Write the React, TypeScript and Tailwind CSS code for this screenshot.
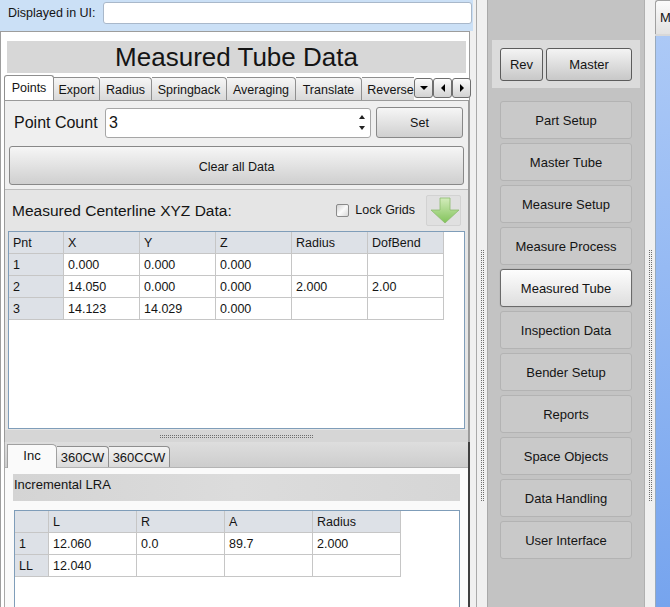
import React from "react";

const vdots =
  "bg-[repeating-linear-gradient(to_bottom,#6e6e6e_0px,#6e6e6e_1px,transparent_1px,transparent_2px)]";
const hdots =
  "bg-[repeating-linear-gradient(to_right,#6e6e6e_0px,#6e6e6e_1px,transparent_1px,transparent_2px)]";

function VGrip({ h }: { h: number }) {
  return (
    <div className="flex gap-[1px]" style={{ height: h }}>
      <div className={`w-[1px] h-full ${vdots}`} />
      <div className={`w-[1px] h-full ${vdots}`} />
    </div>
  );
}

function Grid({ cols, rows }: { cols: number[]; rows: string[][] }) {
  return (
    <div>
      {rows.map((r, i) => (
        <div key={i} className="flex">
          {r.map((c, j) => (
            <div
              key={j}
              style={{ width: cols[j] }}
              className={`h-[22px] border-r border-b border-[#c6c6c6] flex items-center pl-[4px] pt-[2px] text-[12.5px] ${
                i === 0 || j === 0 ? "bg-[#dde1e7]" : "bg-white"
              }`}
            >
              {c}
            </div>
          ))}
        </div>
      ))}
    </div>
  );
}

function Tri({ dir }: { dir: "down" | "left" | "right" | "up" }) {
  const pts =
    dir === "down"
      ? "0,0 8,0 4,4"
      : dir === "up"
      ? "0,4 8,4 4,0"
      : dir === "left"
      ? "4,0 4,8 0,4"
      : "0,0 0,8 4,4";
  const w = dir === "down" || dir === "up" ? 8 : 4;
  const h = dir === "down" || dir === "up" ? 4 : 8;
  return (
    <svg width={w} height={h} viewBox={`0 0 ${w} ${h}`}>
      <polygon points={pts} fill="#000" />
    </svg>
  );
}

const topTabs: [string, number][] = [
  ["Export", 46],
  ["Radius", 52],
  ["Springback", 75],
  ["Averaging", 69],
  ["Translate", 66],
  ["Reverse", 58],
];

const navItems = [
  "Part Setup",
  "Master Tube",
  "Measure Setup",
  "Measure Process",
  "Measured Tube",
  "Inspection Data",
  "Bender Setup",
  "Reports",
  "Space Objects",
  "Data Handling",
  "User Interface",
];

export default function App() {
  return (
    <div className="w-[670px] h-[607px] flex overflow-hidden bg-[#f0f0f0] text-[#141414] text-[12.5px] leading-none font-['Liberation_Sans',Arial,sans-serif]">
      {/* LEFT COLUMN */}
      <div className="w-[476px] shrink-0 flex flex-col">
        <div className="h-[31px] w-[473px] shrink-0 bg-[#cbe0f6] flex items-center pl-[8px] pr-[1px] pb-[5px] gap-[7px]">
          <span>Displayed in UI:</span>
          <div className="flex-1 h-[22px] bg-white border border-[#a9b8ca] rounded-[3px]" />
        </div>

        <div className="flex-1 min-h-0 w-[470px] bg-white border-x border-t border-[#9d9d9d] flex flex-col pl-[3px]">
          <div className="mt-[9px] ml-[3px] w-[459px] h-[32px] shrink-0 bg-[#d7d7d7] flex items-center justify-center text-[26px]">
            Measured Tube Data
          </div>

          {/* tabs row */}
          <div className="mt-[2px] h-[25px] shrink-0 flex items-end w-[465px]">
            <div className="flex-1 h-full flex items-end overflow-hidden">
              <div className="relative z-10 -mb-px w-[50px] h-[26px] shrink-0 bg-white border-t border-l border-r border-[#8f8f8f] rounded-t-[3px] flex items-center justify-center">
                Points
              </div>
              {topTabs.map(([t, w]) => (
                <div
                  key={t}
                  style={{ width: w }}
                  className="h-[23px] shrink-0 bg-linear-to-b from-[#f6f6f6] to-[#d9d9d9] border-t border-r border-[#8f8f8f] rounded-tr-[4px] flex items-center justify-center pt-[3px] whitespace-nowrap"
                >
                  {t}
                </div>
              ))}
            </div>
            <div className="flex mb-[2px] mr-[-2px]">
              {(["down", "left", "right"] as const).map((d) => (
                <div
                  key={d}
                  className="w-[19px] h-[20px] rounded-[3px] border border-[#6f6f6f] bg-linear-to-b from-[#fbfbfb] to-[#d3d3d3] flex items-center justify-center"
                >
                  <Tri dir={d} />
                </div>
              ))}
            </div>
          </div>

          {/* points pane */}
          <div className="w-[465px] shrink-0 border-x border-t border-[#9a9a9a] bg-[#efefef] flex flex-col">
            <div className="mt-[6px] h-[31px] flex items-center pl-[9px]">
              <span className="text-[16px] w-[91px]">Point Count</span>
              <div className="w-[266px] h-[30px] bg-white border border-[#a6a6a6] rounded-[3px] flex items-center pl-[3px] text-[16px] relative">
                3
                <div className="absolute right-[5px] top-[6px] flex flex-col gap-[7px]">
                  <svg width="6" height="4" viewBox="0 0 6 4">
                    <polygon points="0,4 6,4 3,0" fill="#222" />
                  </svg>
                  <svg width="6" height="4" viewBox="0 0 6 4">
                    <polygon points="0,0 6,0 3,4" fill="#222" />
                  </svg>
                </div>
              </div>
              <div className="ml-[5px] w-[87px] h-[31px] rounded-[3px] border border-[#888] bg-linear-to-b from-[#f6f6f6] to-[#d0d0d0] flex items-center justify-center pt-[1px]">
                Set
              </div>
            </div>
            <div className="mt-[8px] ml-[4px] w-[455px] h-[39px] rounded-[3px] border border-[#888] bg-linear-to-b from-[#f6f6f6] to-[#cfcfcf] flex items-center justify-center pt-[3px]">
              Clear all Data
            </div>

            {/* section */}
            <div className="mt-[4px] border-t border-[#bdbdbd] bg-[#e5e5e5] flex flex-col">
              <div className="mt-[5px] h-[31px] flex items-center pl-[7px] pr-[7px]">
                <span className="text-[15.5px] flex-1">Measured Centerline XYZ Data:</span>
                <div className="w-[13px] h-[13px] rounded-[2px] border border-[#8a8a8a] bg-linear-to-br from-[#d2d2d2] via-[#fafafa] to-[#d8d8d8]" />
                <span className="ml-[6px]">Lock Grids</span>
                <div className="ml-[11px] w-[35px] h-[31px] bg-[#e0e0e0] border border-[#d2d2d2] rounded-[2px] relative">
                  <svg width="35" height="31" viewBox="0 0 35 31" className="absolute left-[-1px] top-[-1px]">
                    <defs>
                      <linearGradient id="ga" x1="0" y1="0" x2="0" y2="1">
                        <stop offset="0" stopColor="#d3ecbb" />
                        <stop offset="1" stopColor="#82c35a" />
                      </linearGradient>
                    </defs>
                    <polygon
                      points="14,3 24,3 24,15 33,15 19,28 5,15 14,15"
                      fill="url(#ga)"
                      stroke="#8dbb70"
                      strokeWidth="0.8"
                    />
                  </svg>
                </div>
              </div>
              <div className="mt-[5px] ml-[3px] w-[457px] h-[198px] border border-[#7f9db9] bg-white overflow-hidden">
                <Grid
                  cols={[55, 76, 76, 76, 76, 76]}
                  rows={[
                    ["Pnt", "X", "Y", "Z", "Radius", "DofBend"],
                    ["1", "0.000", "0.000", "0.000", "", ""],
                    ["2", "14.050", "0.000", "0.000", "2.000", "2.00"],
                    ["3", "14.123", "14.029", "0.000", "", ""],
                  ]}
                />
              </div>
              <div className="h-[1px]" />
            </div>
            {/* splitter */}
            <div className="h-[12px] bg-[#d6d6d6] flex items-center justify-center">
              <div className="flex flex-col gap-[1px] w-[153px]">
                <div className={`h-[1px] w-full ${hdots}`} />
                <div className={`h-[1px] w-full ${hdots}`} />
              </div>
            </div>
          </div>

          {/* bottom tab widget */}
          <div className="flex-1 min-h-0 w-[466px] flex flex-col border-r-2 border-[#3f3f3f] border-l border-l-[#a8a8a8]">
            <div className="h-[25px] shrink-0 bg-linear-to-b from-[#dedede] to-[#cdcdcd] flex items-end pl-[2px]">
              <div className="relative z-10 -mb-px w-[50px] h-[24px] bg-[#fafafa] border-t border-l border-r border-[#a0a0a0] rounded-tr-[5px] flex items-center justify-center text-[13px] pb-[2px]">
                Inc
              </div>
              <div className="w-[52px] h-[21px] bg-linear-to-b from-[#f4f4f4] to-[#dadada] border-t border-r border-[#8f8f8f] rounded-tr-[4px] flex items-center justify-center text-[13px] pt-[1px]">
                360CW
              </div>
              <div className="w-[61px] h-[21px] bg-linear-to-b from-[#f4f4f4] to-[#dadada] border-t border-r border-[#8f8f8f] rounded-tr-[4px] flex items-center justify-center text-[13px] pt-[1px]">
                360CCW
              </div>
            </div>
            <div className="flex-1 min-h-0 bg-[#fafafa] border-t border-[#b4b4b4] flex flex-col pl-[8px]">
              <div className="mt-[6px] w-[447px] h-[27px] bg-linear-to-r from-[#d4d4d4] via-[#dcdcdc] to-[#d6d6d6] pl-[1px] pt-[4px] text-[13px]">
                Incremental LRA
              </div>
              <div className="mt-[9px] ml-[1px] w-[446px] flex-1 border border-b-0 border-[#7f9db9] bg-white">
                <Grid
                  cols={[34, 88, 88, 88, 88]}
                  rows={[
                    ["", "L", "R", "A", "Radius"],
                    ["1", "12.060", "0.0", "89.7", "2.000"],
                    ["LL", "12.040", "", "", ""],
                  ]}
                />
              </div>
            </div>
          </div>
        </div>
      </div>

      {/* SEPARATOR 1 */}
      <div className="w-[12px] shrink-0 border-x border-[#a9a9a9] bg-[#f0f0f0] flex flex-col items-center pt-[250px]">
        <VGrip h={252} />
      </div>

      {/* MIDDLE NAV PANEL */}
      <div className="w-[156px] shrink-0 bg-[#c3c3c3] flex flex-col items-center pt-[40px]">
        <div className="w-[148px] h-[48px] bg-[#dbdbdb] flex items-center pl-[8px] gap-[3px]">
          <div className="w-[43px] h-[33px] rounded-[3px] border border-[#5c5c5c] bg-linear-to-b from-[#f4f4f4] to-[#c8c8c8] flex items-center justify-center text-[13px]">
            Rev
          </div>
          <div className="w-[86px] h-[33px] rounded-[3px] border border-[#5c5c5c] bg-linear-to-b from-[#f4f4f4] to-[#c8c8c8] flex items-center justify-center text-[13px]">
            Master
          </div>
        </div>
        <div className="mt-[13px] w-[132px] flex flex-col gap-[4px]">
          {navItems.map((n) =>
            n === "Measured Tube" ? (
              <div
                key={n}
                className="h-[38px] rounded-[3px] border border-[#6a6a6a] bg-linear-to-b from-[#fdfdfd] to-[#dedede] shadow-[0_0_1px_#888] flex items-center justify-center text-[13px]"
              >
                {n}
              </div>
            ) : (
              <div
                key={n}
                className="h-[38px] rounded-[3px] border border-[#b3b3b3] bg-[#c9c9c9] flex items-center justify-center text-[13px]"
              >
                {n}
              </div>
            )
          )}
        </div>
      </div>

      {/* SEPARATOR 2 */}
      <div className="w-[11px] shrink-0 border-l border-[#b0b0b0] bg-[#f0f0f0] flex flex-col items-center pt-[250px]">
        <VGrip h={252} />
      </div>

      {/* RIGHT EDGE */}
      <div className="flex-1 flex flex-col">
        <div className="h-[34px] shrink-0 bg-linear-to-b from-[#fbfbfb] to-[#e2e2e2] border-l border-t border-[#a0a0a0] rounded-tl-[3px] flex items-center pl-[4px] text-[13px] overflow-hidden">
          M
        </div>
        <div className="h-[2px] bg-[#d8d8d8]" />
        <div className="flex-1 bg-linear-to-b from-[#acc9f6] to-[#76a4ee] border-l border-[#9ab]" />
      </div>
    </div>
  );
}
